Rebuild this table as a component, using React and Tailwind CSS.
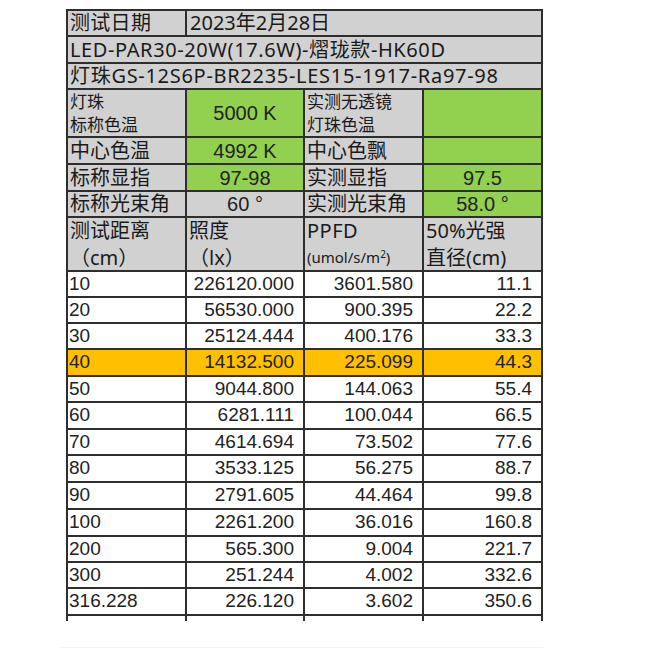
import React from "react";

const B = "border-r-2 border-b-2 border-[#2e2e2e]";
const GRAY = "bg-[#d1d1d1]";
const GREEN = "bg-[#92d050]";
const HF = "font-['Noto_Sans','Noto_Sans_CJK_SC',sans-serif] text-[#1a1a1a]";
const DF = "font-['Liberation_Sans','Noto_Sans_CJK_SC',sans-serif] text-[#222]";

const data = [
  ["10", "226120.000", "3601.580", "11.1", 26],
  ["20", "56530.000", "900.395", "22.2", 26],
  ["30", "25124.444", "400.176", "33.3", 26],
  ["40", "14132.500", "225.099", "44.3", 27, true],
  ["50", "9044.800", "144.063", "55.4", 26],
  ["60", "6281.111", "100.044", "66.5", 27],
  ["70", "4614.694", "73.502", "77.6", 26],
  ["80", "3533.125", "56.275", "88.7", 27],
  ["90", "2791.605", "44.464", "99.8", 27],
  ["100", "2261.200", "36.016", "160.8", 27],
  ["200", "565.300", "9.004", "221.7", 26],
  ["300", "251.244", "4.002", "332.6", 26],
  ["316.228", "226.120", "3.602", "350.6", 27],
];

function HCell({ children, className = "", h }) {
  return (
    <div
      className={`${B} ${HF} flex items-center pl-[2px] text-[20px] leading-[22px] whitespace-nowrap ${className}`}
      style={{ height: h }}
    >
      {children}
    </div>
  );
}

export default function App() {
  return (
    <div className="w-[648px] h-[648px] bg-white overflow-hidden">
      <div className="ml-[66px] mt-[9px] w-[477px] border-l-2 border-t-2 border-[#2e2e2e] grid grid-cols-[119px_118px_119px_119px]">
        {/* row 1 */}
        <HCell className={`${GRAY} tracking-[0.3px]`} h={26}>测试日期</HCell>
        <HCell className={`${GRAY} col-span-3 pl-[3px]`} h={26}>2023年2月28日</HCell>
        {/* row 2 */}
        <HCell className={`${GRAY} col-span-4 tracking-[0.6px]`} h={27}>LED-PAR30-20W(17.6W)-熠珑款-HK60D</HCell>
        {/* row 3 */}
        <HCell className={`${GRAY} col-span-4 tracking-[0.7px]`} h={26}>灯珠GS-12S6P-BR2235-LES15-1917-Ra97-98</HCell>
        {/* row 4 */}
        <div className={`${B} ${HF} ${GRAY} h-[48px] pl-[2px] flex flex-col justify-center text-[17px] leading-[23px]`}>
          <span>灯珠</span>
          <span>标称色温</span>
        </div>
        <div className={`${B} ${DF} ${GREEN} h-[48px] flex items-center justify-center text-[20px]`}>5000 K</div>
        <div className={`${B} ${HF} ${GRAY} h-[48px] pl-[2px] flex flex-col justify-center text-[17px] leading-[23px]`}>
          <span>实测无透镜</span>
          <span>灯珠色温</span>
        </div>
        <div className={`${B} ${GREEN} h-[48px]`}></div>
        {/* row 5 */}
        <HCell className={GRAY} h={27}>中心色温</HCell>
        <div className={`${B} ${DF} ${GREEN} h-[27px] flex items-center justify-center text-[20px]`}>4992 K</div>
        <HCell className={GRAY} h={27}>中心色飘</HCell>
        <div className={`${B} ${GREEN} h-[27px]`}></div>
        {/* row 6 */}
        <HCell className={GRAY} h={27}>标称显指</HCell>
        <div className={`${B} ${DF} ${GREEN} h-[27px] flex items-center justify-center text-[20px]`}>97-98</div>
        <HCell className={GRAY} h={27}>实测显指</HCell>
        <div className={`${B} ${DF} ${GREEN} h-[27px] flex items-center justify-center text-[20px]`}>97.5</div>
        {/* row 7 */}
        <HCell className={GRAY} h={26}>标称光束角</HCell>
        <div className={`${B} ${DF} ${GRAY} h-[26px] flex items-center justify-center text-[20px]`}>60 °</div>
        <HCell className={GRAY} h={26}>实测光束角</HCell>
        <div className={`${B} ${DF} ${GREEN} h-[26px] flex items-center justify-center text-[20px]`}>58.0 °</div>
        {/* header row */}
        <div className={`${B} ${HF} ${GRAY} h-[54px] pl-[2px] flex flex-col justify-center text-[20px] leading-[27px]`}>
          <span>测试距离</span>
          <span>（cm）</span>
        </div>
        <div className={`${B} ${HF} ${GRAY} h-[54px] pl-[2px] flex flex-col justify-center text-[20px] leading-[27px]`}>
          <span>照度</span>
          <span>（lx）</span>
        </div>
        <div className={`${B} ${HF} ${GRAY} h-[54px] pl-[2px] flex flex-col justify-center leading-[27px]`}>
          <span className="text-[20px] tracking-[0.5px]">PPFD</span>
          <span className="text-[15px]">
            (umol/s/m<sup className="text-[10px]">2</sup>)
          </span>
        </div>
        <div className={`${B} ${HF} ${GRAY} h-[54px] pl-[2px] flex flex-col justify-center text-[20px] leading-[27px]`}>
          <span>50%光强</span>
          <span>直径(cm)</span>
        </div>
        {/* data rows */}
        {data.map(([a, b, c, d, h, hl]) => {
          const bg = hl ? "bg-[#ffc000]" : "bg-white";
          return (
            <React.Fragment key={a}>
              <div className={`${B} ${DF} ${bg} pl-[1px] flex items-center text-[19px]`} style={{ height: h }}>{a}</div>
              <div className={`${B} ${DF} ${bg} pr-[9px] flex items-center justify-end text-[19px]`} style={{ height: h }}>{b}</div>
              <div className={`${B} ${DF} ${bg} pr-[9px] flex items-center justify-end text-[19px]`} style={{ height: h }}>{c}</div>
              <div className={`${B} ${DF} ${bg} pr-[9px] flex items-center justify-end text-[19px]`} style={{ height: h }}>{d}</div>
            </React.Fragment>
          );
        })}
        <div className="border-r-2 border-[#2e2e2e] h-[5px]"></div>
        <div className="border-r-2 border-[#2e2e2e] h-[5px]"></div>
        <div className="border-r-2 border-[#2e2e2e] h-[5px]"></div>
        <div className="border-r-2 border-[#2e2e2e] h-[5px]"></div>
      </div>
      <div className="ml-[57px] mt-[26px] w-[490px] h-[6px] bg-[#f4f2f1] rounded-t-md"></div>
    </div>
  );
}
